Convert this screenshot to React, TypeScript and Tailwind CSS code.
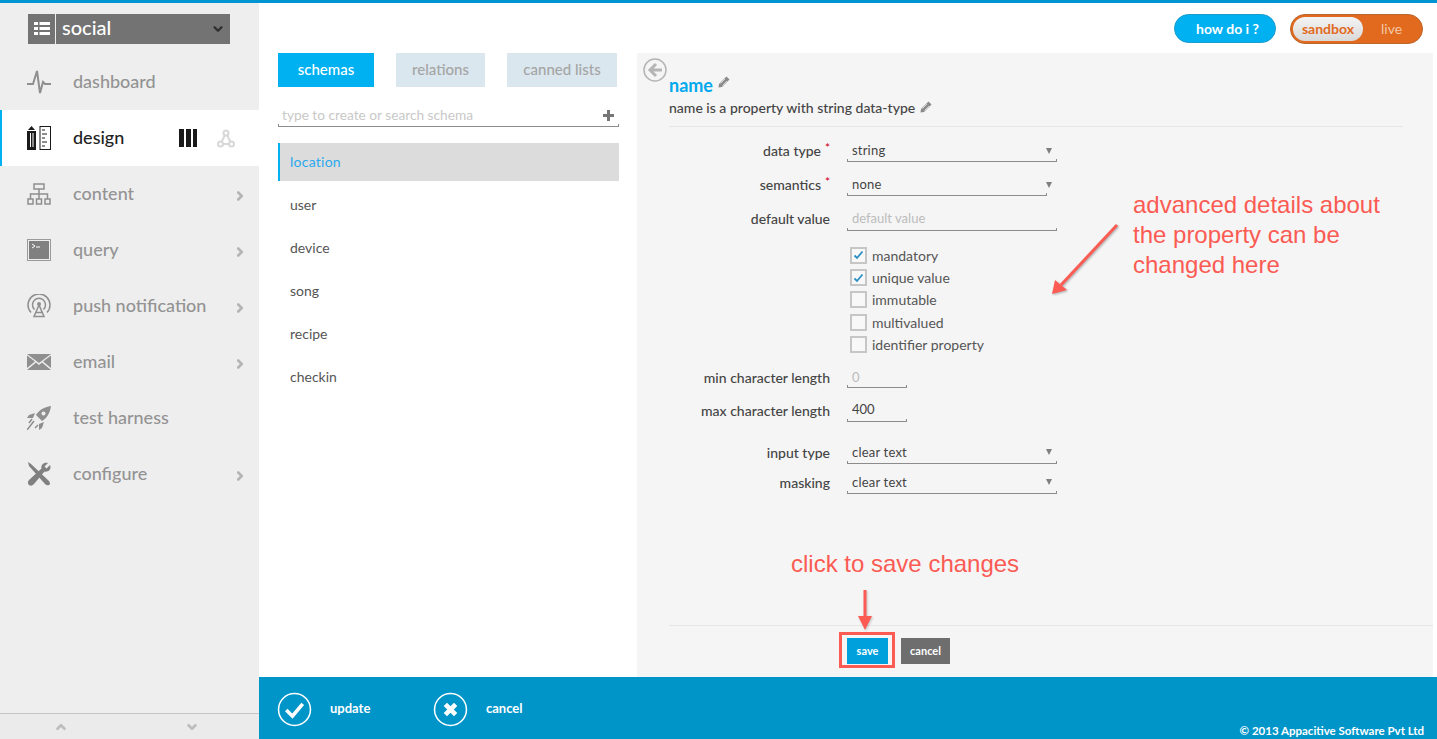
import React from 'react';
import { ChevronDown, ChevronRight, ChevronUp } from 'lucide-react';

const ActivityIcon = () => (
  <svg width="24" height="24" viewBox="0 0 24 24" fill="none" stroke="#8f8f8f" strokeWidth="2">
    <path d="M0 14 L6 14 L10 1 L13 23 L16 12 L18 14 L24 14" />
  </svg>
);

const DesignIcon = () => (
  <svg width="24" height="24" viewBox="0 0 24 24">
    <path d="M4.5 0 L8 4 H1 Z" fill="#1a1a1a" />
    <rect x="0" y="5" width="9" height="19" fill="#1a1a1a" />
    <rect x="3" y="7" width="1" height="14" fill="#fff" />
    <rect x="5.5" y="7" width="1" height="14" fill="#fff" />
    <rect x="13" y="0.5" width="10.5" height="23" fill="#fff" stroke="#1a1a1a" />
    <path d="M15 4h3M15 8h5M15 12h3M15 16h5M15 20h3" stroke="#1a1a1a" />
  </svg>
);

const ContentIcon = () => (
  <svg width="24" height="22" viewBox="0 0 24 22" fill="none" stroke="#8f8f8f" strokeWidth="1.5">
    <rect x="7" y="1" width="10" height="5" />
    <path d="M12 6v5M3.5 16v-5h17v5M12 11v5" />
    <rect x="1" y="16" width="5" height="5" />
    <rect x="9.5" y="16" width="5" height="5" />
    <rect x="18" y="16" width="5" height="5" />
  </svg>
);

const QueryIcon = () => (
  <svg width="24" height="22" viewBox="0 0 24 22">
    <rect x="0.5" y="0.5" width="23" height="21" fill="none" stroke="#9a9a9a" />
    <rect x="2" y="2" width="20" height="18" fill="#808080" />
    <path d="M5 5l3 2-3 2" fill="none" stroke="#fff" strokeWidth="1" />
    <path d="M9 8h4" stroke="#fff" strokeWidth="1" />
  </svg>
);

const PushIcon = () => (
  <svg width="24" height="24" viewBox="0 0 24 24" fill="none" stroke="#8f8f8f" strokeWidth="1.5">
    <path d="M4 18.5a11 11 0 1 1 16 0" />
    <path d="M7.5 15.5a6.5 6.5 0 1 1 9 0" />
    <circle cx="12" cy="10" r="2" fill="#8f8f8f" stroke="none" />
    <path d="M12 11 L7 22.5 H17 Z" />
    <path d="M9 18.5h6" />
  </svg>
);

const MailIcon = () => (
  <svg width="24" height="16" viewBox="0 0 24 16" fill="#8f8f8f">
    <path d="M0 0H24L12 9Z" />
    <path d="M0 1.5V14L8 7.5Z" />
    <path d="M24 1.5V14L16 7.5Z" />
    <path d="M0 16L9 8.5L12 11L15 8.5L24 16Z" />
  </svg>
);

const RocketIcon = () => (
  <svg width="24" height="24" viewBox="0 0 24 24">
    <path d="M24 0 C17 1 12 4 9 9 L15 15 C20 12 23 7 24 0 Z" fill="#8f8f8f" />
    <circle cx="16.5" cy="7.5" r="2" fill="#eeeeee" />
    <path d="M8 7 L2 9 L0 12 L6 12 Z M17 16 L15 22 L12 24 L12 18 Z" fill="#8f8f8f" />
    <path d="M7 15 L0 24 M5 13 L2 17 M11 19 L8 22" stroke="#8f8f8f" strokeWidth="1.5" />
  </svg>
);

const WrenchIcon = () => (
  <svg width="24" height="24" viewBox="0 0 24 24" fill="#808080">
    <path d="M1 0 L4 2 L22 19 Q24 22 22 23 Q20 24 18 22 L2 4 Z" />
    <path d="M23 3 L19.5 6.5 L17.5 4.5 L21 1 C17 -0.5 13.5 3 14.5 6.5 L2 18 C0 20 1 23 3 23.5 C5 24 6 23 7 22 L17.5 9.5 C21 10.5 25 7.5 23 3 Z" />
  </svg>
);

const NAV = [
  { label: 'dashboard', icon: <ActivityIcon /> },
  { label: 'design', icon: <DesignIcon />, active: true },
  { label: 'content', icon: <ContentIcon />, arrow: true },
  { label: 'query', icon: <QueryIcon />, arrow: true },
  { label: 'push notification', icon: <PushIcon />, arrow: true },
  { label: 'email', icon: <MailIcon />, arrow: true },
  { label: 'test harness', icon: <RocketIcon /> },
  { label: 'configure', icon: <WrenchIcon />, arrow: true },
];

const SCHEMAS = ['location', 'user', 'device', 'song', 'recipe', 'checkin'];

const Pencil = () => (
  <svg width="12" height="12" viewBox="0 0 12 12" fill="#8a8a8a">
    <path d="M8.5 0.5 L11.5 3.5 L4 11 L0.5 11.5 L1 8 Z" />
    <path d="M2.5 7.5 L7 3 M4.5 9.5 L9 5" stroke="#f5f5f5" strokeWidth="0.7" />
  </svg>
);

const Caret = () => <span className="w-0 h-0 border-x-[3.5px] border-x-transparent border-t-[6px] border-t-[#7f7f7f]" />;

const Underline = ({ className = '' }: { className?: string }) => (
  <div className={`h-[3px] border-x border-b border-[#8c8c8c] ${className}`} />
);

const Field = ({ label, required, children, className = 'h-[34px]' }: { label: string; required?: boolean; children: React.ReactNode; className?: string }) => (
  <div className={`flex items-center ${className}`}>
    <div className={`w-[161px] pt-[2px] text-right text-[14px] leading-none text-[#444] font-medium relative ${required ? 'pr-[9px]' : ''}`}>
      {label}
      {required && <span className="absolute right-0 top-0 text-[#d0021b] text-[12px]">*</span>}
    </div>
    <div className="ml-[17px]">{children}</div>
  </div>
);

const SelectBox = ({ value, short }: { value: string; short?: boolean }) => (
  <div className="w-[210px] mt-[2px]">
    <div className="flex items-center justify-between pl-[5px] pr-[5px] pt-[2px] h-[19px] text-[13px] text-[#444]">
      <span className="tracking-[0.2px]">{value}</span>
      <Caret />
    </div>
    <Underline className={short ? 'w-[200px]' : ''} />
  </div>
);

const TextBox = ({ value, muted, wide, className = '', textClass = 'leading-[19px]' }: { value: string; muted?: boolean; wide?: boolean; className?: string; textClass?: string }) => (
  <div className={`${wide ? 'w-[210px]' : 'w-[60px]'} ${className}`}>
    <div className={`pl-[5px] h-[19px] text-[13px] ${textClass} ${muted ? 'text-[#bcbcbc]' : 'text-[#444]'}`}>{value}</div>
    <Underline />
  </div>
);

const Check = ({ label, checked }: { label: string; checked?: boolean }) => (
  <div className="flex items-center h-[22.4px] pl-[181px]">
    <span className="w-[17px] h-[17px] border-2 border-[#c6c6c6] bg-[#f8f8f8] flex items-center justify-center">
      {checked && (
        <svg width="11" height="10" viewBox="0 0 11 10" fill="none" stroke="#2a8fc4" strokeWidth="1.8">
          <path d="M1.5 5.5 L4 8 L9.5 1.5" />
        </svg>
      )}
    </span>
    <span className="ml-[5px] text-[14px] text-[#555]">{label}</span>
  </div>
);

const App: React.FC = () => {
  return (
    <div className="w-[1437px] h-[739px] relative overflow-hidden flex flex-col bg-white font-['Lato',sans-serif]">
      <div className="h-[3px] bg-[#0095d0] shrink-0" />
      <div className="flex flex-1 min-h-0">
        {/* Sidebar */}
        <aside className="w-[259px] shrink-0 bg-[#eeeeee] flex flex-col">
          <div className="h-[51px] pt-[11px] pl-[28px]">
            <div className="flex w-[202px] h-[30px] bg-[#737373] text-white">
              <div className="w-[28px] flex items-center justify-center border-r border-[#eeeeee]">
                <svg width="16" height="14" viewBox="0 0 16 14" fill="#fff">
                  <rect x="0" y="0" width="4" height="3" />
                  <rect x="5.5" y="0" width="10.5" height="3" />
                  <rect x="0" y="5" width="4" height="3" />
                  <rect x="5.5" y="5" width="10.5" height="3" />
                  <rect x="0" y="10" width="4" height="3" />
                  <rect x="5.5" y="10" width="10.5" height="3" />
                </svg>
              </div>
              <div className="flex-1 flex items-center justify-between pl-[5px] pr-[5px] ml-px">
                <span className="text-[20px] font-medium leading-none -mt-[4px]">social</span>
                <ChevronDown size={14} strokeWidth={4} className="text-[#2f2f2f]" />
              </div>
            </div>
          </div>
          <nav className="flex-1">
            {NAV.map(item => (
              <div
                key={item.label}
                className={`h-[56px] flex items-center pr-[12px] ${item.active ? 'bg-white border-l-[2px] border-[#00b1f2] pl-[25px]' : 'pl-[27px]'}`}
              >
                <div className="w-[24px] flex justify-center shrink-0">{item.icon}</div>
                <span className={`ml-[22px] -mt-[2px] text-[18px] font-medium leading-none ${item.active ? 'text-[#222]' : 'text-[#939393]'}`}>{item.label}</span>
                {item.arrow && <ChevronRight size={14} strokeWidth={4.5} className="ml-auto mt-[4px] text-[#b5b5b5]" />}
                {item.active && (
                  <div className="ml-auto flex items-center gap-[20px] pr-[12px]">
                    <div className="flex gap-[2px]">
                      <span className="w-[5px] h-[18px] bg-[#1a1a1a]" />
                      <span className="w-[5px] h-[18px] bg-[#1a1a1a]" />
                      <span className="w-[4px] h-[18px] bg-[#1a1a1a]" />
                    </div>
                    <svg width="18" height="19" viewBox="0 0 18 19" fill="none" stroke="#d8d8d8" strokeWidth="2">
                      <circle cx="9" cy="4" r="2.5" />
                      <circle cx="3.5" cy="15" r="2.5" />
                      <circle cx="14.5" cy="15" r="2.5" />
                      <path d="M8 6L4.5 13M10 6l3.5 7M6 15h6" />
                    </svg>
                  </div>
                )}
              </div>
            ))}
          </nav>
          <div className="h-[26px] border-t border-[#c4c4c4] bg-[#ebebeb] flex items-center">
            <div className="w-[124px] flex justify-center">
              <ChevronUp size={14} strokeWidth={4.5} className="text-[#bdbdbd]" />
            </div>
            <div className="w-[136px] ml-[2px] flex justify-center">
              <ChevronDown size={14} strokeWidth={4.5} className="text-[#bdbdbd]" />
            </div>
          </div>
        </aside>

        {/* Main */}
        <main className="flex-1 min-w-0 flex flex-col">
          <div className="flex flex-1 min-h-0 flex-col">
            <div className="h-[50px] shrink-0 flex justify-end items-start pt-[11px] pr-[14px] gap-[14px]">
              <div className="w-[102px] h-[29px] rounded-full bg-[#00b1f2] border border-[#1a9ccc] flex items-center justify-center pl-[5px] pb-px text-white font-bold text-[14px]">
                how do i ?
              </div>
              <div className="w-[133px] h-[30px] rounded-full bg-[#e26a1f] border border-[#b9662d] flex items-center p-[2px]">
                <div className="w-[70px] h-[24px] pb-px rounded-full bg-gradient-to-b from-[#f4f4f4] to-[#d9d9d9] flex items-center justify-center text-[#e26a1f] font-bold text-[14px]">
                  sandbox
                </div>
                <span className="ml-[18px] pb-px text-[14px] text-[#f3c6a6]">live</span>
              </div>
            </div>

            <div className="flex flex-1 min-h-0">
              {/* Schemas column */}
              <section className="w-[378px] shrink-0 pl-[19px] pr-[18px]">
                <div className="flex gap-[22px] h-[34px]">
                  <div className="w-[96px] pb-px bg-[#00b1f2] text-white font-medium text-[15px] flex items-center justify-center">schemas</div>
                  <div className="w-[89px] pb-px bg-[#dae7ee] text-[#a5a5a5] font-medium text-[15px] flex items-center justify-center">relations</div>
                  <div className="w-[110px] pb-px bg-[#dae7ee] text-[#a5a5a5] font-medium text-[15px] flex items-center justify-center">canned lists</div>
                </div>
                <div className="mt-[17px]">
                  <div className="flex items-center justify-between h-[20px] pl-[4px] pr-[5px] pt-[2px] text-[13.7px] text-[#c8c8c8]">
                    <span>type to create or search schema</span>
                    <svg width="11" height="11" viewBox="0 0 11 11" fill="#777"><path d="M4 0h3v4h4v3H7v4H4V7H0V4h4z" /></svg>
                  </div>
                  <Underline />
                </div>
                <div className="mt-[16px] flex flex-col gap-[5px]">
                  {SCHEMAS.map((s, i) => (
                    <div
                      key={s}
                      className={`h-[38px] pb-px flex items-center text-[14px] ${i === 0 ? 'bg-[#dcdcdc] border-l-2 border-[#00b1f2] pl-[10px] text-[#2aa9ee] tracking-[0.25px]' : 'pl-[12px] text-[#555]'}`}
                    >
                      {s}
                    </div>
                  ))}
                </div>
              </section>

              {/* Property panel */}
              <section className="w-[796px] shrink-0 bg-[#f5f5f5] flex flex-col relative">
                <svg className="absolute left-[6px] top-[5px]" width="24" height="24" viewBox="0 0 24 24" fill="none">
                  <circle cx="12" cy="12" r="11" stroke="#b5b5b5" strokeWidth="1.5" />
                  <path d="M19 12H8M13 6l-6 6 6 6" stroke="#b5b5b5" strokeWidth="3" />
                </svg>
                <div className="pl-[32px] pr-[30px] pt-[20px]">
                  <div className="flex items-start gap-[5px] h-[24px]">
                    <span className="text-[18px] leading-[24px] font-bold text-[#00a9ee]">name</span>
                    <span className="mt-[3px]"><Pencil /></span>
                  </div>
                  <div className="flex items-center gap-[5px] h-[20px] text-[14px] text-[#444] font-medium">
                    name is a property with string data-type <Pencil />
                  </div>
                  <div className="mt-[9px] border-t border-[#e6e6e6]" />
                </div>
                <div className="pl-[32px] pt-[6px]">
                  <Field label="data type" required><SelectBox value="string" /></Field>
                  <Field label="semantics" required><SelectBox value="none" short /></Field>
                  <Field label="default value"><TextBox value="default value" muted wide className="mt-[4px]" /></Field>
                  <div className="mt-[9px] mb-[5px]">
                    <Check label="mandatory" checked />
                    <Check label="unique value" checked />
                    <Check label="immutable" />
                    <Check label="multivalued" />
                    <Check label="identifier property" />
                  </div>
                  <Field label="min character length" className="h-[33px]"><TextBox value="0" muted textClass="leading-[23px]" /></Field>
                  <Field label="max character length" className="h-[33px]"><TextBox value="400" className="mt-[2px]" /></Field>
                  <div className="h-[10px]" />
                  <Field label="input type" className="h-[30px]"><SelectBox value="clear text" /></Field>
                  <Field label="masking" className="h-[30px]"><SelectBox value="clear text" /></Field>
                </div>
                <div className="mt-auto ml-[32px] h-[52px] border-t border-[#e6e6e6] flex items-start pt-[12px] pl-[178px] gap-[13px]">
                  <div className="w-[41px] h-[26px] bg-[#00a0dc] text-white text-[11px] font-bold flex items-center justify-center">save</div>
                  <div className="w-[49px] h-[26px] bg-[#6e6e6e] text-white text-[11px] font-bold flex items-center justify-center">cancel</div>
                </div>
              </section>
            </div>
          </div>

          {/* Footer */}
          <footer className="h-[62px] shrink-0 bg-[#0095c9] relative flex items-center text-white text-[13px] font-bold pl-[18px]">
            <svg className="mt-[3px]" width="35" height="35" viewBox="0 0 34 34" fill="none" stroke="#fff">
              <circle cx="17" cy="17" r="15.5" strokeWidth="1.5" />
              <path d="M9 17.5 L15 23.5 L25 11.5" strokeWidth="3.5" />
            </svg>
            <span className="ml-[18px] mt-[2px] w-[103px]">update</span>
            <svg className="mt-[3px]" width="35" height="35" viewBox="0 0 34 34" fill="none" stroke="#fff">
              <circle cx="17" cy="17" r="15.5" strokeWidth="1.5" />
              <path d="M12 12 L22 22 M22 12 L12 22" strokeWidth="4.5" />
            </svg>
            <span className="ml-[18px] mt-[2px]">cancel</span>
            <span className="absolute right-[13px] bottom-0 text-[11.5px]">© 2013 Appacitive Software Pvt Ltd</span>
          </footer>
        </main>
      </div>

      {/* Annotations */}
      <div className="absolute left-[1133px] top-[190px] text-[24px] leading-[30px] text-[#fb5b53] font-['Liberation_Sans',sans-serif]">
        advanced details about<br />the property can be<br />changed here
      </div>
      <div className="absolute left-[791px] top-[549px] text-[24px] leading-[30px] text-[#fb5b53] font-['Liberation_Sans',sans-serif]">
        click to save changes
      </div>
      <div className="absolute left-[839px] top-[632px] w-[56px] h-[36px] border-[3px] border-[#fb5b53]" />
      <svg className="absolute left-[1045px] top-[220px] drop-shadow-[1px_1px_1px_rgba(0,0,0,0.3)]" width="80" height="80" viewBox="0 0 80 80" fill="#fb5b53">
        <path d="M72 5 L16 65" stroke="#fb5b53" strokeWidth="3" />
        <path d="M7 74 L10 60 L22 70 Z" />
      </svg>
      <svg className="absolute left-[854px] top-[588px] drop-shadow-[1px_1px_1px_rgba(0,0,0,0.2)]" width="24" height="44" viewBox="0 0 24 44" fill="#fb5b53">
        <path d="M11 2 V29" stroke="#fb5b53" strokeWidth="3" />
        <path d="M11 42 L4 28 H18 Z" />
      </svg>
    </div>
  );
};

export default App;
